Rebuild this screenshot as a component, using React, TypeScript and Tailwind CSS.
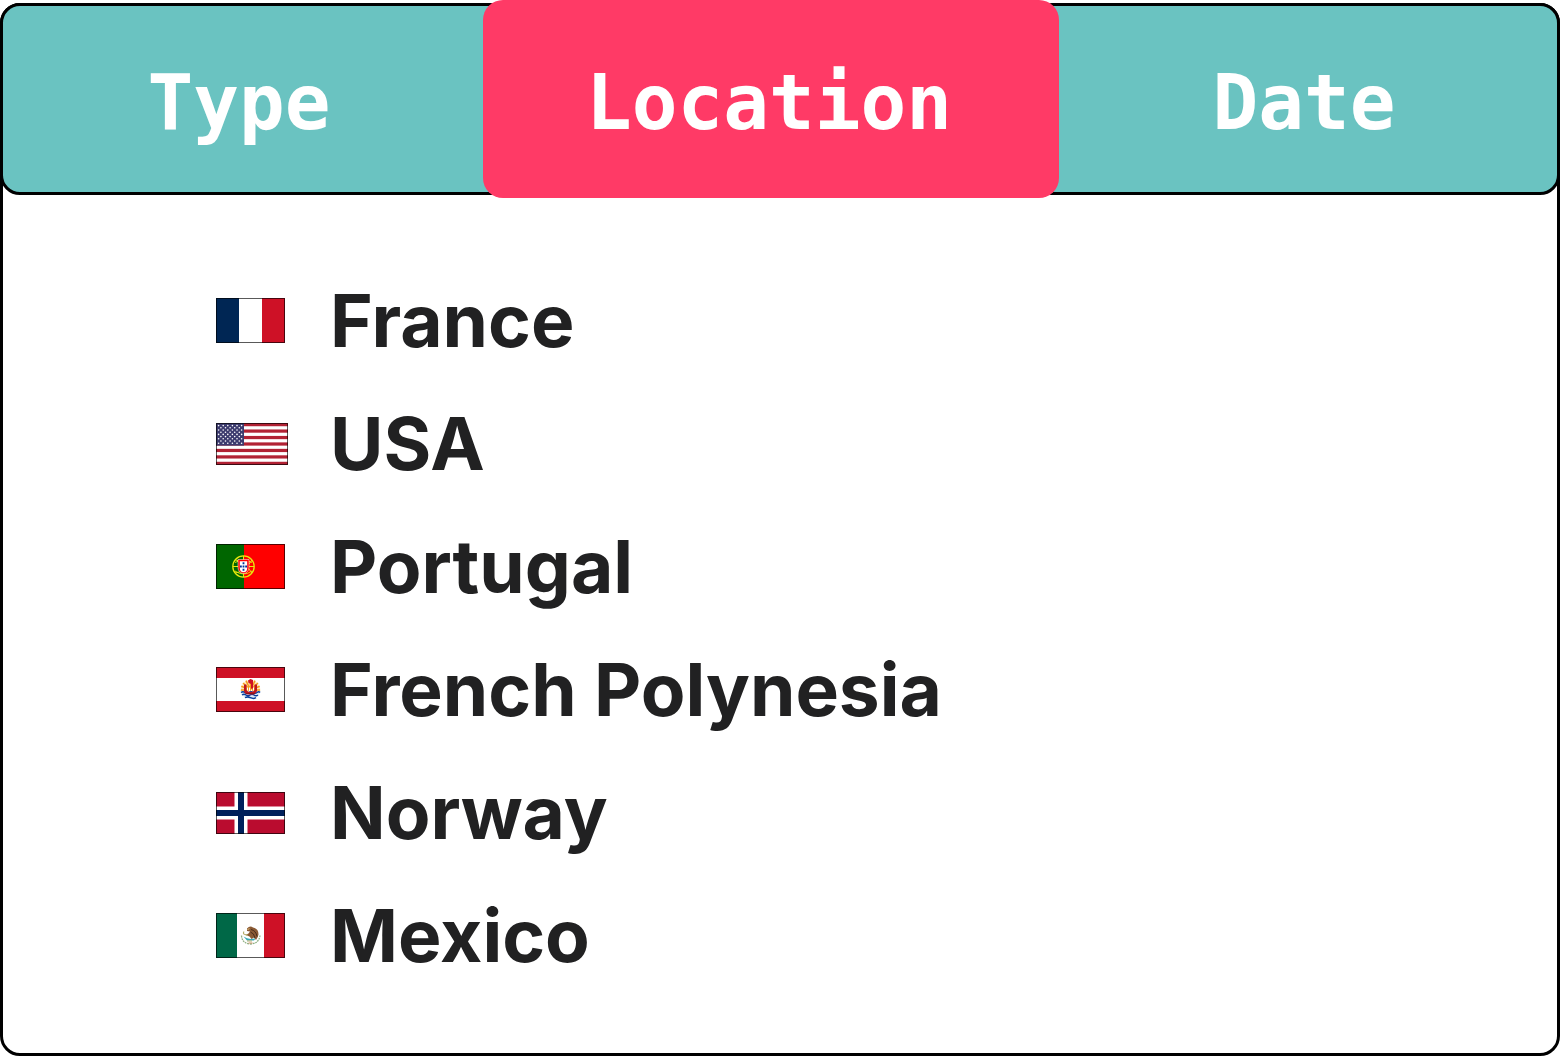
import { useState, type ReactNode } from "react";

function Flag({ name, width, height, children }: { name: string; width: number; height: number; children: ReactNode }) {
  return (
    <svg role="img" aria-label={`Flag of ${name}`} width={width} height={height} viewBox={`0 0 ${width} ${height}`}>
      {children}
      <rect x="0.5" y="0.5" width={width - 1} height={height - 1} fill="none" stroke="#000" strokeOpacity="0.65" />
    </svg>
  );
}

function France() {
  return (
    <Flag name="France" width={69} height={45}>
      <rect width="69" height="45" fill="#fff" />
      <rect width="23" height="45" fill="#002654" />
      <rect x="46" width="23" height="45" fill="#ce1126" />
    </Flag>
  );
}

function Usa() {
  const stars = [];
  for (let row = 0; row < 9; row++) {
    const count = row % 2 === 0 ? 6 : 5;
    for (let i = 0; i < count; i++) {
      stars.push([2.6 + i * 4.6 + (row % 2 === 0 ? 0 : 2.3), 2.6 + row * 2.2]);
    }
  }
  return (
    <Flag name="the USA" width={72} height={42}>
      <rect width="72" height="42" fill="#fff" />
      {[0, 1, 2, 3, 4, 5, 6].map((i) => (
        <rect key={i} y={(i * 84) / 13} width="72" height={42 / 13} fill="#b22234" />
      ))}
      <rect width="28" height="22.6" fill="#3c3b6e" />
      {stars.map(([x, y]) => (
        <circle key={`${x}-${y}`} cx={x} cy={y} r="0.8" fill="#fff" />
      ))}
    </Flag>
  );
}

function Portugal() {
  return (
    <Flag name="Portugal" width={69} height={45}>
      <rect width="69" height="45" fill="#f00" />
      <rect width="28" height="45" fill="#060" />
      <g fill="none" stroke="#e8e80c">
        <circle cx="27.5" cy="22.5" r="10.7" strokeWidth="1.3" />
        <path d="M17 22.5H38M27.5 12V33M19.5 16Q27 16 36 29M19.5 29Q28 28 36 16" strokeWidth="1" />
        <path d="M19 18.5Q27.5 14 36 18.5M19 27Q27.5 33 36 27" strokeWidth="0.9" />
      </g>
      <path d="M22 15.5H33V23.5A5.5 6 0 0 1 22 23.5Z" fill="#f00" stroke="#fff" strokeWidth="0.5" />
      <path d="M23.8 17.3H31.2V24A3.7 4.2 0 0 1 23.8 24Z" fill="#fff" />
      <path d="M26.6 18.2h1.8v2h-1.8zM26.6 21.5h1.8v2h-1.8zM26.6 24.8h1.8v2h-1.8zM24 21.5h1.8v2H24zM29.2 21.5H31v2h-1.8z" fill="#039" />
    </Flag>
  );
}

function FrenchPolynesia() {
  return (
    <Flag name="French Polynesia" width={69} height={45}>
      <rect width="69" height="45" fill="#fff" />
      <rect width="69" height="11" fill="#ce1126" />
      <rect y="34" width="69" height="11" fill="#ce1126" />
      <path d="M24.5 24A10 11 0 1 1 44.5 24Z" fill="#fde8b8" />
      <path
        d="M34.5 23 25 23M34.5 23 25.3 19.3M34.5 23 27 16M34.5 23 30 13.7M34.5 23 34.5 12.5M34.5 23 39 13.7M34.5 23 42 16M34.5 23 43.7 19.3M34.5 23H44"
        stroke="#f59b1c"
        strokeWidth="1.5"
      />
      <path d="M24.6 24.5H44.4A10 8.7 0 0 1 24.6 24.5Z" fill="#dfeaf8" />
      <path
        d="M25 25.5q2-1.5 4 0t4 0 4 0 4 0 3 0M26 28q2-1.5 4 0t4 0 4 0 4 0M29 30.7q2.5-1.5 5.5 0t5.5 0"
        fill="none"
        stroke="#083d9c"
        strokeWidth="1.4"
      />
      <path d="M28 17.5h2.5v5.5q1 2 4 2t4-2v-5.5H41v6.8q-1.5 3.2-4 3.2h-5q-3 0-4-3.2Z" fill="#bd1622" />
      <path d="M32 13.5 34.5 12 37 13v8.5h-2V17l-2.5-1Z" fill="#ce1126" />
      <path d="M31.5 20.5v3M33.5 20.5v3.5M35.5 22.5V24M37.5 20.5v3" stroke="#fff" strokeWidth="1" />
      <path d="M30 26.5h9" stroke="#801016" strokeWidth="0.8" />
    </Flag>
  );
}

function Norway() {
  return (
    <Flag name="Norway" width={69} height={42}>
      <rect width="69" height="42" fill="#ba0c2f" />
      <path d="M25 0V42M0 21H69" stroke="#fff" strokeWidth="13" />
      <path d="M25 0V42M0 21H69" stroke="#00205b" strokeWidth="6" />
    </Flag>
  );
}

function Mexico() {
  return (
    <Flag name="Mexico" width={69} height={45}>
      <rect width="69" height="45" fill="#fff" />
      <rect width="21" height="45" fill="#006847" />
      <rect x="48" width="21" height="45" fill="#ce1126" />
      <path d="M25.5 22.5Q26 30.5 34.5 31Q43 30.5 44 22.5" fill="none" stroke="#8fb083" strokeWidth="1.3" strokeDasharray="1.8 0.8" />
      <path d="M27.5 23.5Q33 27.5 40 25L38 27.5H31Z" fill="#36a9b5" />
      <path d="M31 15.5Q34 12 37 14.5Q42.5 15.5 42.5 21.5Q42 24.5 40 27L38 24.5L35.5 26L33.5 23.5L29.5 22L32.5 20.5L34 18.5L31 18Z" fill="#8a5a34" />
      <path d="M35 16.5Q40 17.5 41 23.5M34.5 19Q38 20 39 25" fill="none" stroke="#4a2d1c" strokeWidth="1" />
      <path d="M28 18.5Q26.5 21 29 21.5T32 22.5M31 28h5" fill="none" stroke="#b5ad6c" strokeWidth="1.1" />
      <path d="M32.5 30h4" stroke="#c98a60" strokeWidth="1" />
      <path d="M31.5 16.5l2-.8" stroke="#e5c078" strokeWidth="1" />
    </Flag>
  );
}

const tabs = ["Type", "Location", "Date"];

const places = [
  { name: "France", flag: <France /> },
  { name: "USA", flag: <Usa /> },
  { name: "Portugal", flag: <Portugal /> },
  { name: "French Polynesia", flag: <FrenchPolynesia /> },
  { name: "Norway", flag: <Norway /> },
  { name: "Mexico", flag: <Mexico /> },
];

export default function App() {
  const [active, setActive] = useState("Location");
  return (
    <div className="flex min-h-screen flex-col bg-white pt-[3px]">
      <main className="flex grow flex-col rounded-[20px] border-[3px] border-black">
        <div
          role="tablist"
          className="-mx-[3px] -mt-[3px] grid h-48 grid-cols-[480fr_576fr_498fr] rounded-[20px] border-[3px] border-black bg-[#6ac3c1] font-['DejaVu_Sans_Mono',monospace] text-[76px] leading-none font-bold text-white"
        >
          {tabs.map((tab) => (
            <button
              key={tab}
              role="tab"
              type="button"
              aria-selected={tab === active}
              onClick={() => setActive(tab)}
              className={
                tab === active
                  ? "-my-1.5 flex items-center justify-center rounded-[20px] bg-[#ff3a66] pt-2 pr-1"
                  : "flex items-center justify-center pt-2 pr-2"
              }
            >
              {tab}
            </button>
          ))}
        </div>
        <ul className="flex flex-col pt-16 pl-[213px] font-['Inter',sans-serif] text-[73px] leading-none font-bold text-[#212122]">
          {places.map(({ name, flag }) => (
            <li key={name} className="flex h-[123px] items-center">
              <span className="w-[114px] shrink-0">{flag}</span>
              <span>{name}</span>
            </li>
          ))}
        </ul>
      </main>
    </div>
  );
}
